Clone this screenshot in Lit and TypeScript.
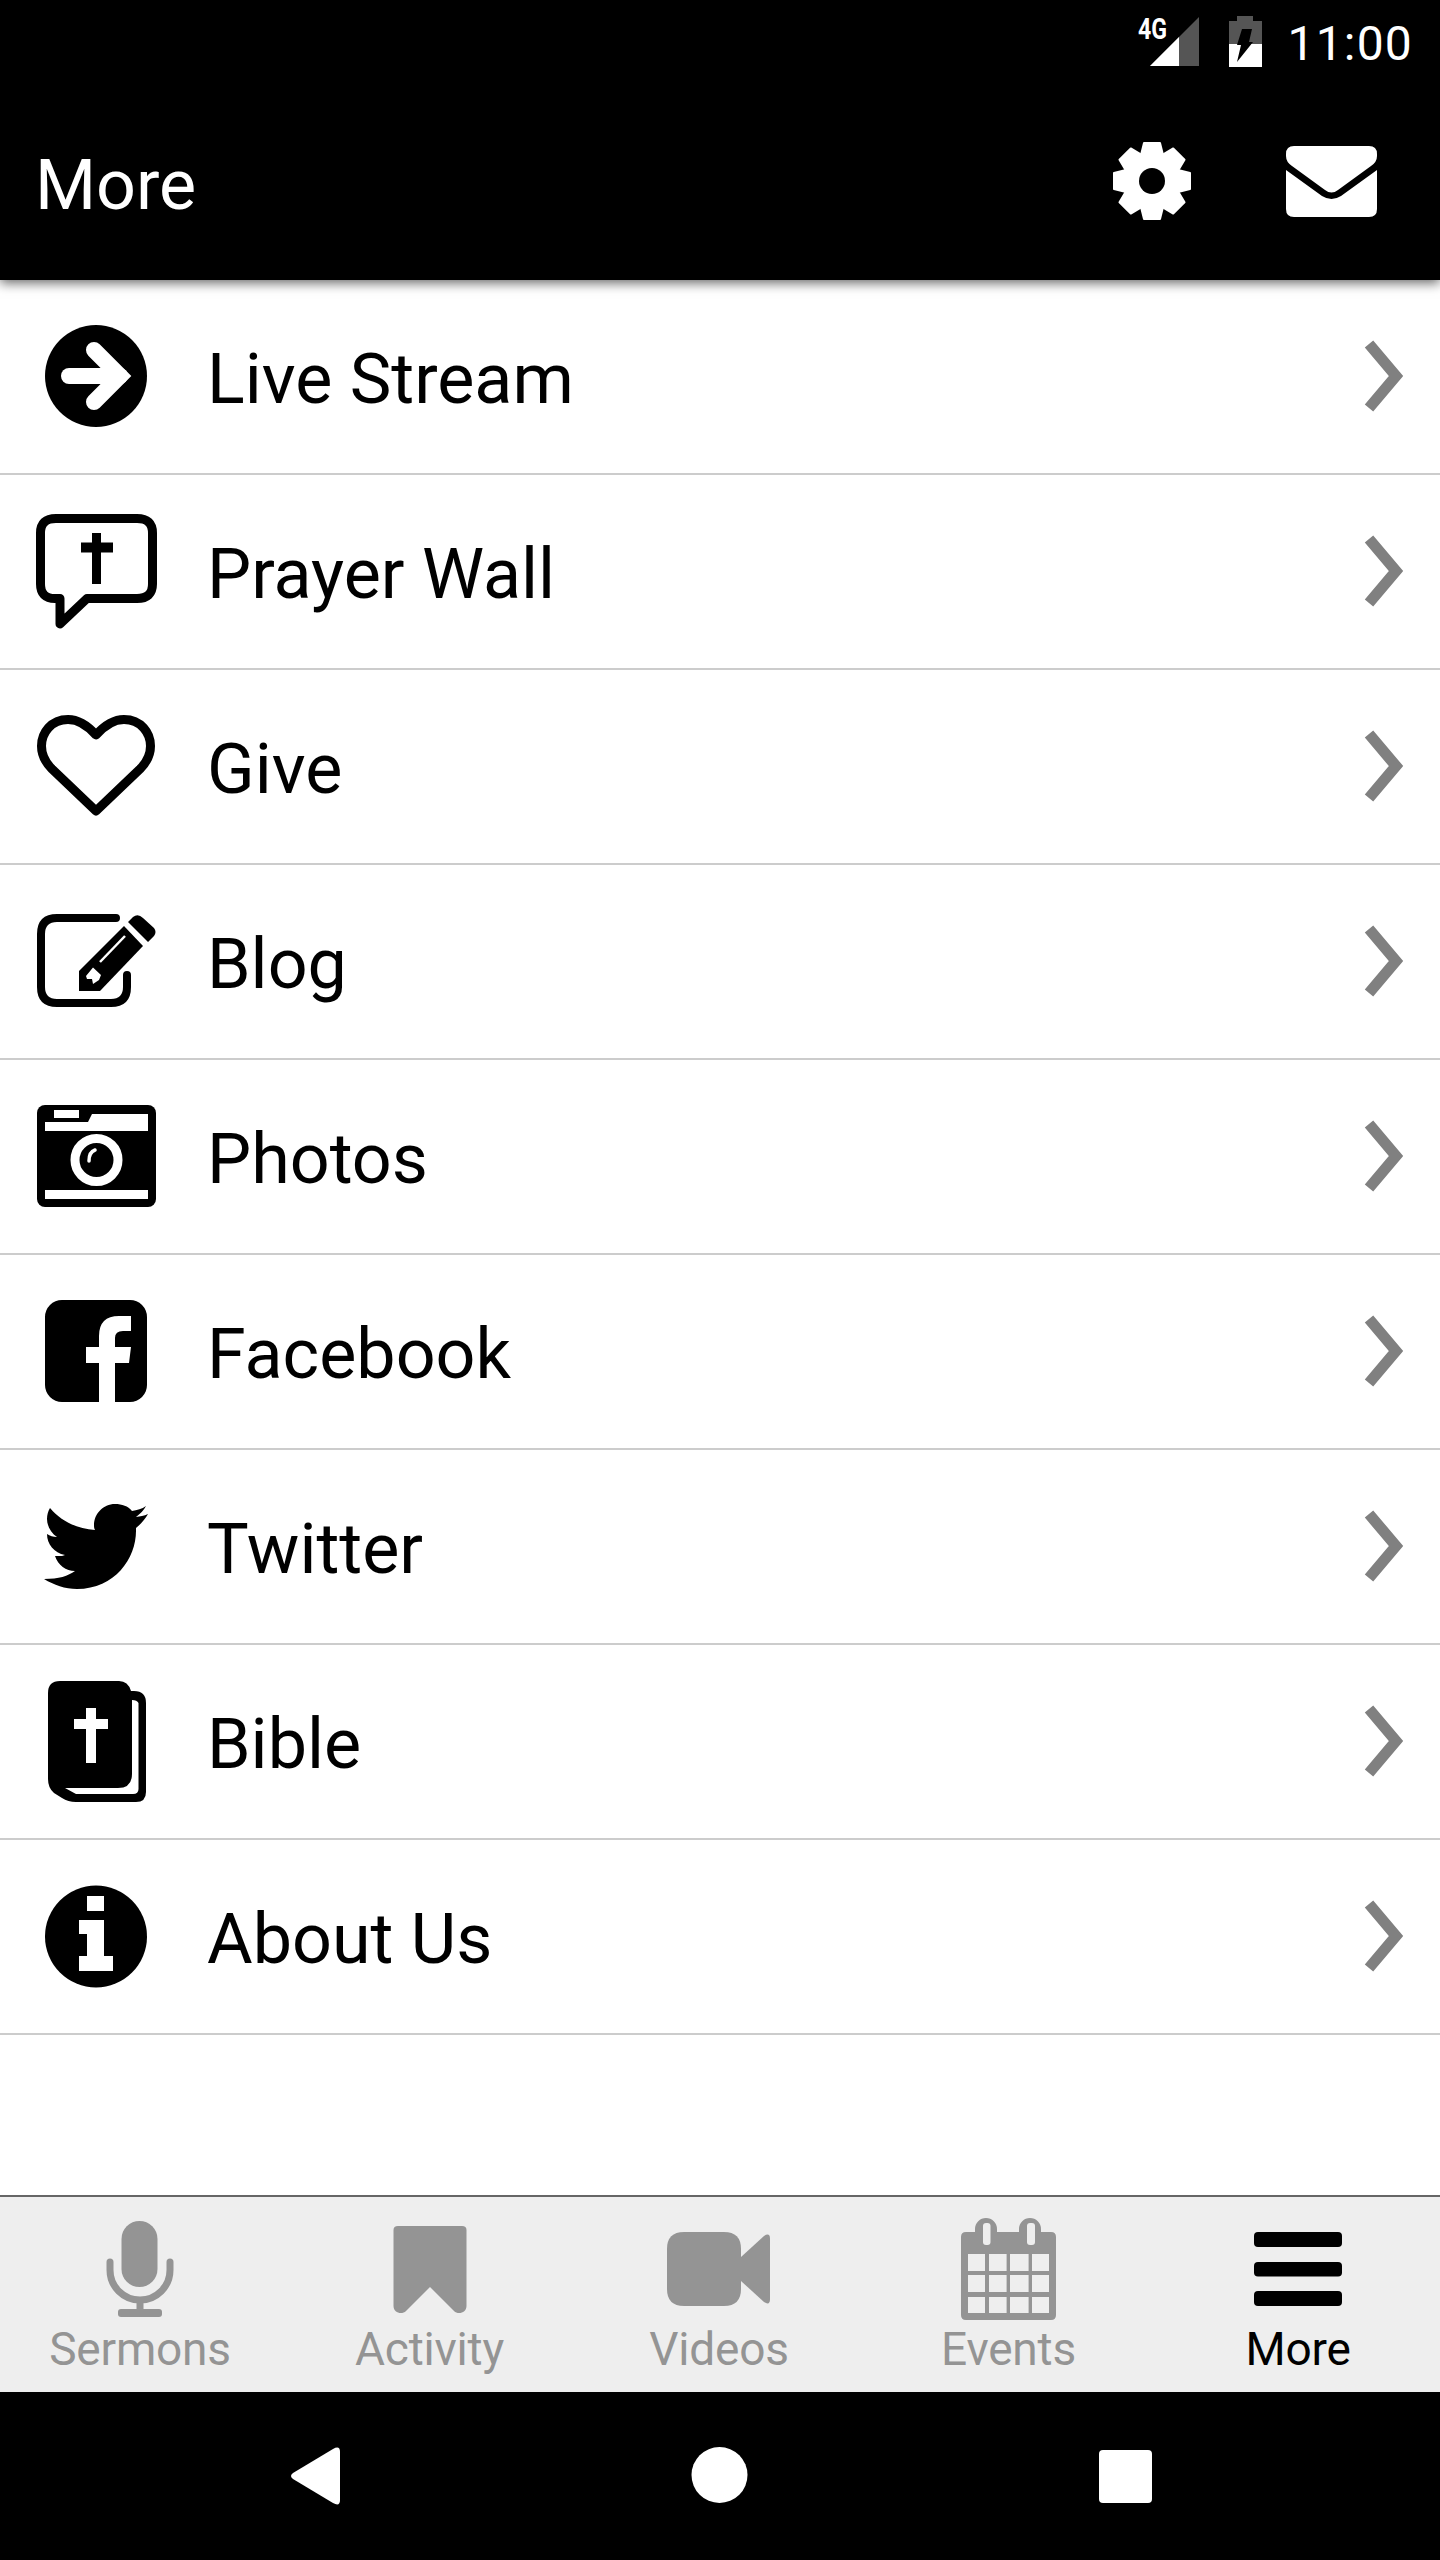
import { LitElement, html, css, svg } from "lit";
import { customElement } from "lit/decorators.js";

const icons: Record<string, unknown> = {
  live: svg`<circle cx="60" cy="60" r="51"/><path d="M33 60H84" fill="none" stroke="#fff" stroke-width="16" stroke-linecap="round"/><path d="M58 34L84 60L58 86" fill="none" stroke="#fff" stroke-width="16" stroke-linecap="round" stroke-linejoin="miter"/>`,
  prayer: svg`<path d="M20 7.5H101Q116.5 7.5 116.5 22V73Q116.5 87.5 101 87.5H51L24 113V87.5H19Q4.5 87.5 4.5 73V22Q4.5 7.5 20 7.5Z" fill="none" stroke="#000" stroke-width="9" stroke-linejoin="round"/><path d="M60.5 22V73" stroke="#000" stroke-width="9" fill="none"/><path d="M45 36.5H77" stroke="#000" stroke-width="10" fill="none"/>`,
  give: svg`<path d="M60 29C52 20 43 13.5 32 13.5C15 13.5 5.5 27 5.5 40C5.5 50 10 57 16 63L60 105L104 63C110 57 114.5 50 114.5 40C114.5 27 105 13.5 88 13.5C77 13.5 68 20 60 29Z" fill="none" stroke="#000" stroke-width="9" stroke-linejoin="round"/>`,
  blog: svg`<path d="M80 17H21Q5 17 5 33V86Q5 102 21 102H75Q91 102 91 86V74" fill="none" stroke="#000" stroke-width="8" stroke-linecap="round"/><path d="M43 90V70L88 25L107 45L64 90Z"/><path d="M92 21L97 16Q102 12 107 17L118 27Q121 31 118 35L112 41Z"/><path d="M50 75L57 66.5L65 74L63 79L57 83L56 78H51Z" fill="#fff"/><path d="M64 61L89 35" stroke="#fff" stroke-width="2.5"/>`,
  photos: svg`<rect x="1" y="9" width="119" height="102" rx="8"/><path d="M9 35V26H52L56 18H112V35Z" fill="#fff"/><rect x="18" y="14" width="25" height="8" fill="#fff"/><rect x="9" y="94" width="103" height="9" fill="#fff"/><circle cx="60.5" cy="64" r="21.5" fill="none" stroke="#fff" stroke-width="9"/><path d="M53 65Q53 56 59 54" fill="none" stroke="#fff" stroke-width="3.5" stroke-linecap="round"/>`,
  facebook: svg`<path d="M26 9H94A17 17 0 0 1 111 26V94A17 17 0 0 1 94 111H79V72H93L95 56H79V47Q79 40 87 40H95V25H83Q63 25 63 45V56H50V72H63V111H26A17 17 0 0 1 9 94V26A17 17 0 0 1 26 9Z"/>`,
  twitter: svg`<path d="M112 28C108 30 104 30 100 31C104 28 108 24 110 20C106 23 101 24 96 25C92 20 86 18 79 18C67 18 58 28 58 39C58 41 58 42 59 44C41 43 25 35 14 22C12 25 11 29 11 33C11 40 15 47 21 51C17 51 14 50 11 48C11 58 18 67 29 69C27 70 25 70 23 70C21 70 20 70 19 70C22 79 30 85 39 85C32 90 23 93 8 93C18 99 29 103 41 103C79 103 100 72 100 45C100 44 100 43 100 42C105 38 109 33 112 28Z"/>`,
  bible: svg`<path d="M24 0H83Q92 0 95 10H98Q110 10 110 22V111Q110 121 100 121H40Q32 121 26 117L18 112Q12 107 12 98V12Q12 0 24 0Z"/><path d="M96 19Q101 19 102.5 22V108Q102.5 113 97 113H40L29 107H82Q96 107 96 93Z" fill="#fff"/><path d="M55 27V82" stroke="#fff" stroke-width="10" fill="none"/><path d="M38 43H72" stroke="#fff" stroke-width="10" fill="none"/>`,
  about: svg`<circle cx="60" cy="60.5" r="51"/><path d="M51 20H68V35H51ZM43 44H68V80H77V95H43V80H51V58H43Z" fill="#fff"/>`,
};

const cols = [19, 40, 61, 83];
const colW = [17, 17.6, 18.6, 17];
const cellRows = [[42, 17], [63, 17], [85, 16]];

const tabIcons: Record<string, unknown> = {
  mic: svg`<rect x="41.5" y="9" width="36" height="66" rx="18"/><path d="M30 50V58A30 30 0 0 0 90 58V50" fill="none" stroke="currentColor" stroke-width="7" stroke-linecap="round"/><path d="M60 90V99" stroke="currentColor" stroke-width="7"/><rect x="38" y="97" width="44" height="8" rx="3"/>`,
  bookmark: svg`<path d="M23.5 18Q23.5 14 28 14H92Q96.5 14 96.5 18V94C96.5 101 88 103 84 99L60 75L36 99C32 103 23.5 101 23.5 94Z"/>`,
  video: svg`<path d="M25 20H65Q82 20 82 37V77Q82 94 65 94H25Q8 94 8 77V37Q8 20 25 20Z"/><path d="M82 45L105 24Q111 20 111 27V87Q111 94 105 90L82 69Z"/>`,
  events: svg`<path d="M17 20H26V17A11 11 0 0 1 48 17V20H70V17A11 11 0 0 1 92 17V20H102Q107 20 107 25V103Q107 108 102 108H17Q12 108 12 103V25Q12 20 17 20Z"/>
    <rect x="34" y="11" width="7.5" height="22" rx="3" fill="#eee"/><rect x="78" y="11" width="8" height="22" rx="3" fill="#eee"/>
    ${cellRows.map(([y, h]) => cols.map((x, i) => svg`<rect x=${x} y=${y} width=${colW[i]} height=${h} fill="#eee"/>`))}`,
  more: svg`<rect x="16" y="20" width="88" height="15" rx="4"/><rect x="16" y="50" width="88" height="14.5" rx="4"/><rect x="16" y="79" width="88" height="15" rx="4"/>`,
};

const rows = [
  ["Live Stream", "live"], ["Prayer Wall", "prayer"], ["Give", "give"],
  ["Blog", "blog"], ["Photos", "photos"], ["Facebook", "facebook"],
  ["Twitter", "twitter"], ["Bible", "bible"], ["About Us", "about"],
];
const tabs = [
  ["Sermons", "mic"], ["Activity", "bookmark"], ["Videos", "video"],
  ["Events", "events"], ["More", "more"],
];
const teeth = [0, 45, 90, 135, 180, 225, 270, 315];

@customElement("app-root")
export class AppRoot extends LitElement {
  static styles = css`
    :host { display: block; width: 1440px; height: 2560px; font-family: Roboto, sans-serif; background: #fff; }
    .page { display: flex; flex-direction: column; height: 2560px; overflow: hidden; }
    .top { height: 280px; background: #000; color: #fff; display: flex; flex-direction: column; flex: none; box-shadow: 0 3px 11px rgba(0,0,0,.6); position: relative; z-index: 1; }
    .status { height: 84px; box-sizing: border-box; padding: 0 27px 1px 0; display: flex; align-items: center; justify-content: flex-end; }
    .status svg { display: block; overflow: visible; }
    .sig { width: 49px; height: 49px; margin-right: 30px; }
    .bat { width: 33px; height: 51px; margin-right: 25px; }
    .time { font-size: 48px; letter-spacing: 1.2px; line-height: 56px; margin-top: 5px; }
    .g4 { font: 700 29px Roboto, sans-serif; fill: #fff; }
    .head { flex: 1; display: flex; align-items: center; padding: 0 63px 0 35px; }
    .title { flex: 1; font-size: 70px; line-height: 70px; margin-top: 5px; }
    .gear { width: 78px; height: 78px; margin-right: 95px; margin-top: -2px; display: block; }
    .mail { width: 91px; height: 71px; margin-top: -1px; display: block; }
    .list { flex: 1; }
    .row { height: 195px; box-sizing: border-box; border-bottom: 2px solid #ccc; display: flex; align-items: center; padding: 0 32px 0 36px; }
    .ico { width: 120px; height: 120px; flex: none; margin-right: 51px; margin-top: -1px; display: block; overflow: visible; }
    .label { flex: 1; font-size: 70px; color: #000; line-height: 80px; margin-top: 5px; }
    .chev { width: 48px; height: 80px; margin-top: -1px; display: block; }
    .tabs { height: 197px; box-sizing: border-box; background: #eee; border-top: 2px solid #666; padding-right: 2px; display: grid; grid-template-columns: repeat(5, 289.5px); justify-content: center; flex: none; }
    .tab { display: flex; flex-direction: column; align-items: center; color: #949494; padding-top: 15px; }
    .tab.on { color: #000; }
    .tab svg { width: 120px; height: 108px; display: block; fill: currentColor; overflow: visible; flex: none; }
    .tab span { font-size: 46px; line-height: 54px; margin-top: 2px; letter-spacing: -0.2px; }
    .nav { height: 168px; background: #000; flex: none; }
    .nav svg { width: 1440px; height: 168px; display: block; fill: #fff; }
  `;
  render() {
    return html`<div class="page">
      <div class="top">
        <div class="status">
          <svg class="sig" viewBox="0 0 49 49"><text class="g4" x="-12" y="22" textLength="29" lengthAdjust="spacingAndGlyphs">4G</text><path d="M0 49L49 0V49Z" fill="#555"/><path d="M0 49L29 20V49Z" fill="#fff"/></svg>
          <svg class="bat" viewBox="0 0 33 51"><path d="M8 0H24V5H33V51H0V5H8Z" fill="#555"/><path d="M0 28H33V51H0Z" fill="#fff"/><path d="M13 13H23L20 26H24L8 46L12 29H8Z" fill="#000"/></svg>
          <span class="time">11:00</span>
        </div>
        <div class="head">
          <div class="title">More</div>
          <svg class="gear" viewBox="-39 -39 78 78" fill="#fff">
            <circle r="29"/>
            ${teeth.map((a) => svg`<path d="M-8 -38H8L12 -22H-12Z" stroke="#fff" stroke-width="2" stroke-linejoin="round" transform="rotate(${a})"/>`)}
            <circle r="13" fill="#000"/>
          </svg>
          <svg class="mail" viewBox="0 0 91 71" fill="#fff"><path d="M8 0H83Q91 0 91 8V10Q91 16 85 20L52 44Q45.5 49 39 44L6 20Q0 16 0 10V8Q0 0 8 0Z"/><path d="M0 24L36 50Q45.5 56 55 50L91 24V63Q91 71 83 71H8Q0 71 0 63Z"/></svg>
        </div>
      </div>
      <div class="list">
        ${rows.map(([t, i]) => html`<div class="row">
          <svg class="ico" viewBox="0 0 120 120">${icons[i]}</svg>
          <div class="label">${t}</div>
          <svg class="chev" viewBox="0 0 48 80"><path d="M9 8L36 40L9 72" fill="none" stroke="#808080" stroke-width="11"/></svg>
        </div>`)}
      </div>
      <div class="tabs">
        ${tabs.map(([t, i]) => html`<div class="tab ${t === "More" ? "on" : ""}">
          <svg viewBox="0 0 120 108">${tabIcons[i]}</svg>
          <span>${t}</span>
        </div>`)}
      </div>
      <div class="nav">
        <svg viewBox="0 0 1440 168">
          <path d="M293 81L333 57Q340 53 340 60V108Q340 115 333 111L293 87Q289 84 293 81Z"/>
          <circle cx="719.5" cy="83" r="28"/>
          <rect x="1099" y="58" width="53" height="53" rx="4"/>
        </svg>
      </div>
    </div>`;
  }
}
